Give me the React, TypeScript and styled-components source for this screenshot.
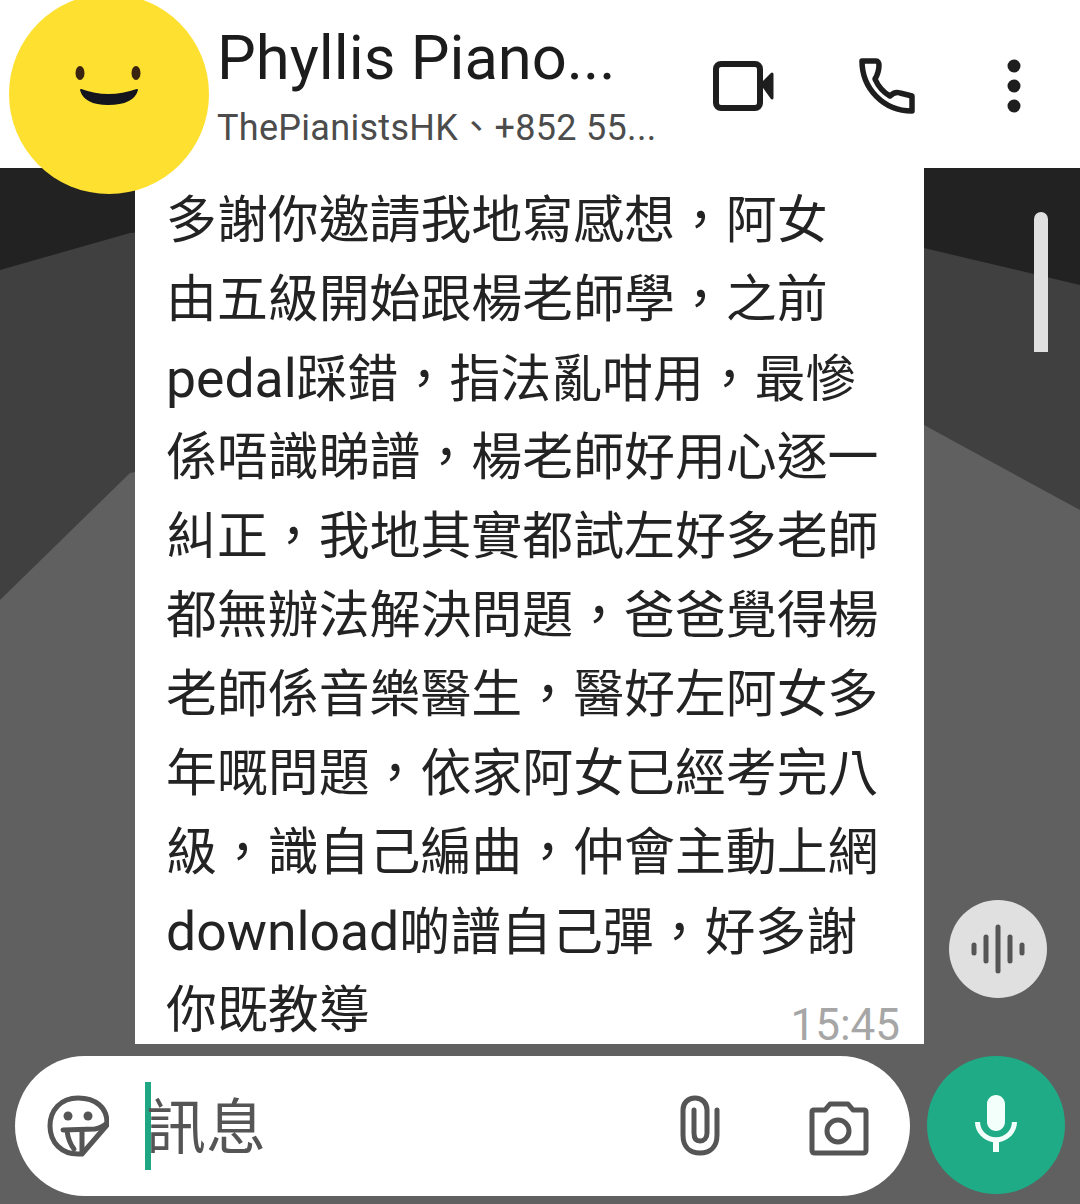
import styled, { createGlobalStyle } from "styled-components";
import { MdMic } from "react-icons/md";

const GlobalStyle = createGlobalStyle`
    html, body {
        margin: 0;
        padding: 0;
        background: #606060;
    }
    * {
        box-sizing: border-box;
    }
`;

const Screen = styled.div`
    position: relative;
    width: 1080px;
    height: 1204px;
    overflow: hidden;
    display: flex;
    flex-direction: column;
    font-family: Roboto, "Noto Sans CJK TC", sans-serif;
    background: #606060;
`;

const Header = styled.header`
    height: 168px;
    flex-shrink: 0;
    background: #fff;
    display: flex;
    padding-left: 217px;
`;

const Avatar = styled.div`
    position: absolute;
    left: 9px;
    top: -6px;
    width: 200px;
    height: 200px;
    border-radius: 50%;
    background: #fde030;
    z-index: 2;
    svg {
        position: absolute;
        left: 60px;
        top: 64px;
    }
`;

const Titles = styled.div`
    width: 495px;
    flex-shrink: 0;
    padding-top: 23px;
`;

const Title = styled.div`
    font-size: 61.5px;
    line-height: 70px;
    color: #1c1c1c;
    white-space: nowrap;
`;

const Subtitle = styled.div`
    margin-top: 13px;
    font-size: 36px;
    line-height: 44px;
    color: #4c4c4c;
    letter-spacing: 0.3px;
    white-space: nowrap;
`;

const HeaderIcons = styled.div`
    display: flex;
    align-items: flex-start;
    padding-top: 56px;
`;

const HeaderIcon = styled.div<{ $width: number }>`
    width: ${(props) => props.$width}px;
    height: 60px;
    flex-shrink: 0;
    display: flex;
    align-items: center;
`;

// wallpaper bands behind the bubble
const Chat = styled.main`
    position: relative;
    flex: 1;
    min-height: 0;
    padding-left: 135px;
    background: #222;
    &::before,
    &::after {
        content: "";
        position: absolute;
        inset: 0;
    }
    &::before {
        background: #404040;
        clip-path: polygon(0 102px, 130px 65px, 500px 40px, 924px 80px, 1080px 117px, 1080px 100%, 0 100%);
    }
    &::after {
        background: #606060;
        clip-path: polygon(0 432px, 130px 305px, 500px 230px, 924px 257px, 1080px 342px, 1080px 100%, 0 100%);
    }
`;

const Bubble = styled.div`
    position: relative;
    z-index: 1;
    width: 789px;
    height: 876px;
    background: #fff;
    padding: 13px 0 0 31px;
`;

const Line = styled.div`
    height: 79px;
    line-height: 79px;
    font-size: 50.9px;
    color: #232323;
    white-space: nowrap;
`;

const Latin = styled.span`
    font-size: 53.5px;
`;

const Time = styled.span`
    position: absolute;
    right: 24px;
    bottom: 0;
    font-size: 44px;
    line-height: 38px;
    color: #a6a6a6;
`;

const Scrollbar = styled.div`
    position: absolute;
    left: 1034px;
    top: 212px;
    width: 14px;
    height: 140px;
    border-radius: 7px 7px 0 0;
    background: #e0e0e0;
`;

const VoiceButton = styled.div`
    position: absolute;
    left: 949px;
    top: 900px;
    width: 98px;
    height: 98px;
    border-radius: 50%;
    background: #e0e0e0;
    display: flex;
    align-items: center;
    justify-content: center;
`;

const InputRow = styled.footer`
    flex-shrink: 0;
    height: 160px;
    display: flex;
    align-items: flex-start;
    padding: 12px 15px 0;
`;

const InputPill = styled.div`
    width: 895px;
    height: 140px;
    border-radius: 70px;
    background: #fff;
    display: flex;
    align-items: center;
    padding: 0 40px 0 32px;
`;

const Caret = styled.div`
    width: 6px;
    height: 88px;
    margin-left: 36px;
    background: #1fa784;
    flex-shrink: 0;
`;

const Placeholder = styled.div`
    flex: 1;
    margin-left: -5px;
    padding-top: 6px;
    font-size: 60px;
    line-height: 70px;
    color: #555;
`;

const PillIcon = styled.div<{ $gap: number }>`
    display: flex;
    margin-left: ${(props) => props.$gap}px;
`;

const MicButton = styled.div`
    width: 138px;
    height: 138px;
    margin-left: 17px;
    border-radius: 50%;
    background: #1fab85;
    color: #f2fffb;
    display: flex;
    align-items: center;
    justify-content: center;
`;

const lines = [
    "多謝你邀請我地寫感想，阿女",
    "由五級開始跟楊老師學，之前",
    "pedal踩錯，指法亂咁用，最慘",
    "係唔識睇譜，楊老師好用心逐一",
    "糾正，我地其實都試左好多老師",
    "都無辦法解決問題，爸爸覺得楊",
    "老師係音樂醫生，醫好左阿女多",
    "年嘅問題，依家阿女已經考完八",
    "級，識自己編曲，仲會主動上網",
    "download啲譜自己彈，好多謝",
    "你既教導",
];

function App() {
    return (
        <Screen>
            <GlobalStyle />
            <Header>
                <Titles>
                    <Title>Phyllis Piano...</Title>
                    <Subtitle>ThePianistsHK、+852 55...</Subtitle>
                </Titles>
                <HeaderIcons>
                    <HeaderIcon $width={146}>
                        <svg width="64" height="52" viewBox="0 0 64 52" fill="none" stroke="#1e1e1e" strokeWidth="6">
                            <rect x="4" y="4" width="44" height="44" rx="5" />
                            <path d="M50 24 L60 14 V38 Z" fill="#1e1e1e" strokeWidth="3" strokeLinejoin="round" />
                        </svg>
                    </HeaderIcon>
                    <HeaderIcon $width={148}>
                        <svg width="60" height="60" viewBox="0 0 60 60" fill="none" stroke="#1e1e1e" strokeWidth="5.5" strokeLinejoin="round">
                            <path d="M4 5 H18 C20 5 21 7 21 9 C21 14 20 18 17 23 C20 30 25 36 32 40 C35 37 39 36 42 37 L54 40 V55 C25 55 4 32 4 5 Z" />
                        </svg>
                    </HeaderIcon>
                    <HeaderIcon $width={16}>
                        <svg width="16" height="56" viewBox="0 0 16 56" fill="#1e1e1e">
                            <circle cx="8" cy="8" r="6.5" />
                            <circle cx="8" cy="28" r="6.5" />
                            <circle cx="8" cy="48" r="6.5" />
                        </svg>
                    </HeaderIcon>
                </HeaderIcons>
            </Header>
            <Avatar>
                <svg width="80" height="50" viewBox="0 0 80 50">
                    <ellipse cx="11" cy="15" rx="4.5" ry="7" fill="#3a2410" />
                    <ellipse cx="67" cy="15" rx="4.5" ry="7" fill="#3a2410" />
                    <path d="M12 32 Q39 42 68 32 Q64 46 39 46 Q16 46 12 32 Z" fill="#14141e" stroke="#14141e" strokeWidth="2" strokeLinejoin="round" />
                </svg>
            </Avatar>
            <Chat>
                <Bubble>
                    {lines.map((line) => (
                        <Line key={line}>
                            {line.split(/([a-z]+)/).map((part, i) =>
                                i % 2 === 1 ? <Latin key={part}>{part}</Latin> : part
                            )}
                        </Line>
                    ))}
                    <Time>15:45</Time>
                </Bubble>
            </Chat>
            <InputRow>
                <InputPill>
                    <svg width="62" height="66" viewBox="0 -2 62 66" fill="none" stroke="#555" strokeWidth="5" strokeLinecap="round" strokeLinejoin="round">
                        <path d="M60 30 C61 12 48 3 31 3 C14 3 3 15 3 31 C3 48 15 59 31 59 H35 Z" />
                        <path d="M16 35 L48 34 C53 33 57 31 60 28" />
                        <path d="M20 36 C21 43 23 49 27 54" />
                        <path d="M35 36 V58" />
                        <circle cx="21" cy="21" r="4.5" fill="#555" stroke="none" />
                        <circle cx="41" cy="21" r="4.5" fill="#555" stroke="none" />
                    </svg>
                    <Caret />
                    <Placeholder>訊息</Placeholder>
                    <PillIcon $gap={0}>
                        <svg width="44" height="62" viewBox="0 0 44 62" fill="none" stroke="#555" strokeWidth="5" strokeLinecap="round">
                            <path d="M39 15 V40 C39 52 32 58 22 58 C12 58 5 52 5 40 V15 C5 8 10 3 17 3 C24 3 29 8 29 15 V38 C29 43 26 46 22 46 C18 46 16 43 16 38 V15" />
                        </svg>
                    </PillIcon>
                    <PillIcon $gap={86}>
                        <svg width="62" height="62" viewBox="0 0 62 62" fill="none" stroke="#555" strokeWidth="5" strokeLinejoin="round">
                            <path d="M6 15 H17 L22 9 H40 L45 15 H56 Q58 15 58 17 V55 Q58 58 55 58 H7 Q4 58 4 55 V17 Q4 15 6 15 Z" />
                            <circle cx="30" cy="36" r="11" />
                        </svg>
                    </PillIcon>
                </InputPill>
                <MicButton>
                    <MdMic size={72} />
                </MicButton>
            </InputRow>
            <Scrollbar />
            <VoiceButton>
                <svg width="60" height="50" viewBox="0 0 60 50" stroke="#555" strokeWidth="5" strokeLinecap="round">
                    <path d="M6 21 V29" />
                    <path d="M18 13 V37" />
                    <path d="M30 3 V47" />
                    <path d="M42 13 V37" />
                    <path d="M54 21 V29" />
                </svg>
            </VoiceButton>
        </Screen>
    );
}

export default App;
